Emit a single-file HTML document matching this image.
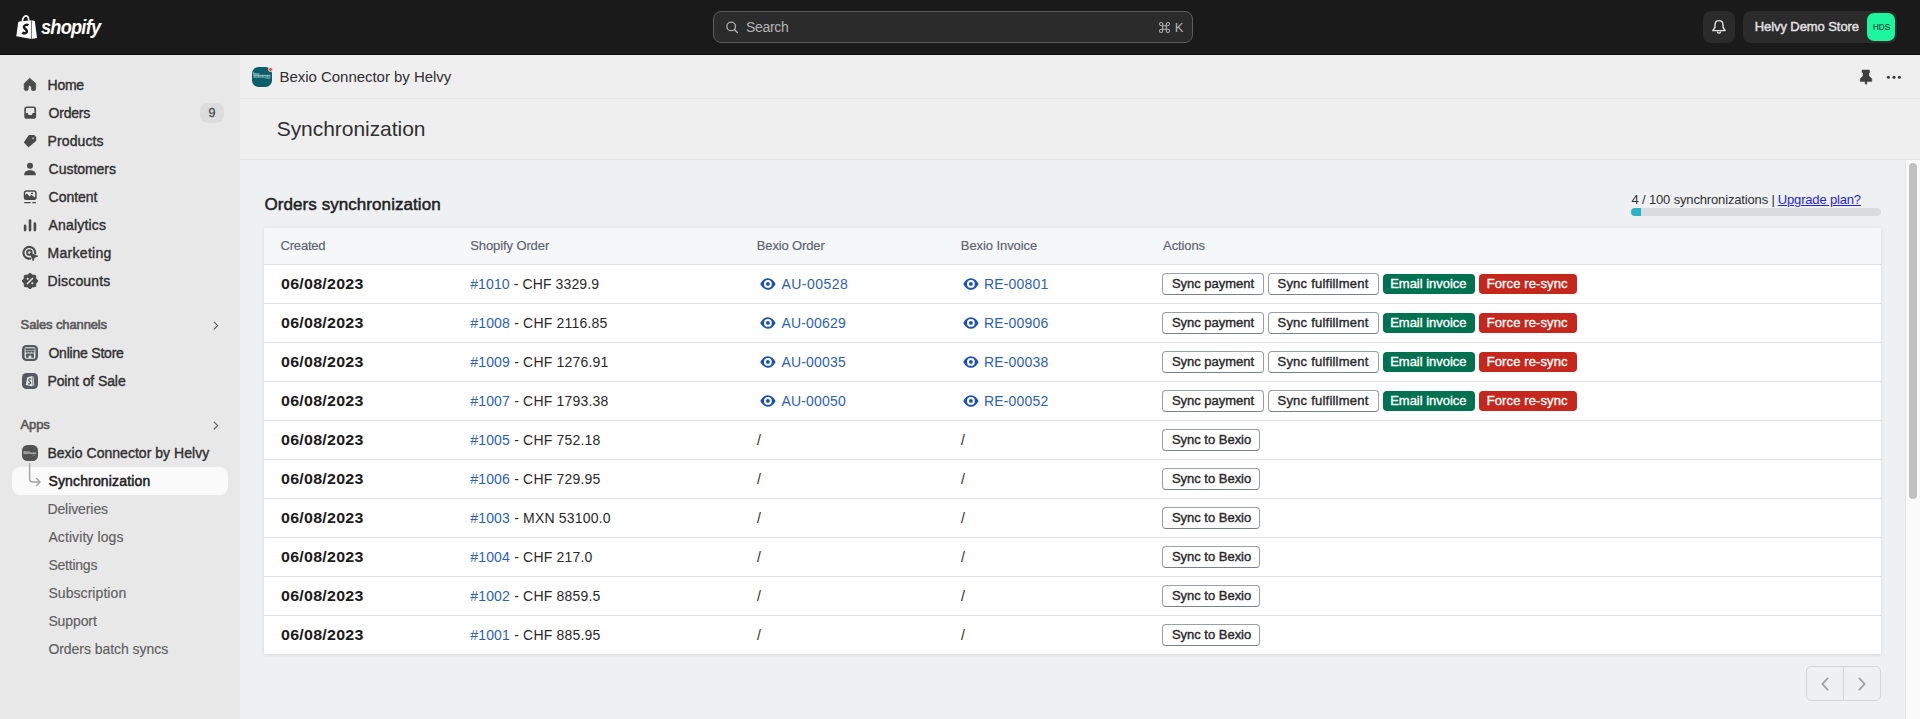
<!DOCTYPE html>
<html><head><meta charset="utf-8"><title>Synchronization</title>
<style>
html,body{margin:0;padding:0;width:1920px;height:719px;overflow:hidden;background:#eff0f2;font-family:"Liberation Sans",sans-serif;}
.a{position:absolute;box-sizing:border-box;}
.t{position:absolute;white-space:nowrap;line-height:0;font-family:"Liberation Sans",sans-serif;}
svg{position:absolute;overflow:visible;}
</style></head><body>
<div class="a" style="left:0px;top:0px;width:1920px;height:55px;background:#1a1a1a;"></div>
<div class="a" style="left:0px;top:54px;width:1920px;height:1px;background:#0c0c0c;"></div>
<div class="a" style="left:0px;top:55px;width:240px;height:664px;background:#e8e8e8;"></div>
<div class="a" style="left:240px;top:55px;width:1680px;height:105px;background:#efefef;"></div>
<div class="a" style="left:240px;top:98px;width:1680px;height:1px;background:#e4e4e4;"></div>
<div class="a" style="left:240px;top:159px;width:1680px;height:1px;background:#e4e4e4;"></div>
<div class="a" style="left:1905px;top:160px;width:15px;height:559px;background:#fafafa;border-left:1px solid #e6e6e6;"></div>
<div class="a" style="left:1909px;top:163px;width:8px;height:336px;background:#c1c1c1;border-radius:4px;"></div>
<div class="a" style="left:713px;top:11px;width:480px;height:32px;background:#2b2b2b;border:1px solid #5c5c5c;border-radius:8px;"></div>
<svg style="left:725px;top:20px" width="14" height="14" viewBox="0 0 14 14"><circle cx="6.2" cy="6.4" r="4.3" fill="none" stroke="#b0b0b0" stroke-width="1.3"/><path d="M9.4 9.6 L12.4 12.6" stroke="#b0b0b0" stroke-width="1.4" stroke-linecap="round"/></svg>
<svg style="left:1159px;top:21.6px" width="11" height="11" viewBox="0 0 11 11"><path d="M3.7 3.7 V2.1 A1.6 1.6 0 1 0 2.1 3.7 H8.9 A1.6 1.6 0 1 0 7.3 2.1 V8.9 A1.6 1.6 0 1 0 8.9 7.3 H2.1 A1.6 1.6 0 1 0 3.7 8.9 Z" fill="none" stroke="#b0b0b0" stroke-width="1.05"/></svg>
<div class="a" style="left:1703px;top:11px;width:32px;height:32px;background:#2b2b2b;border-radius:8px;"></div>
<svg style="left:1711px;top:19px" width="16" height="16" viewBox="0 0 16 16"><path d="M8 1.6c-2.4 0-4 1.9-4 4.3v2.6L1.8 11.6h12.4L12 8.5V5.9C12 3.5 10.4 1.6 8 1.6z" fill="none" stroke="#e3e3e3" stroke-width="1.4" stroke-linejoin="round"/><path d="M6.4 12.4a1.6 1.6 0 0 0 3.2 0" fill="none" stroke="#e3e3e3" stroke-width="1.4"/></svg>
<div class="a" style="left:1743px;top:11px;width:154px;height:32px;background:#2b2b2b;border-radius:8px;"></div>
<div class="a" style="left:1867px;top:13px;width:28px;height:28px;background:#1ef59f;border-radius:7px;"></div>
<svg style="left:16px;top:15px" width="22" height="24" viewBox="0 0 22 24"><path d="M3.2 6.6 L15.5 5.2 L18.8 6 L21 23 L15.5 24 L0.3 21.3 L2.2 7.2 Z" fill="#ffffff"/><path d="M15.5 5.2 L15.6 24" stroke="#1a1a1a" stroke-width="0.6"/><path d="M6.4 6.4 C6.6 2.6 8.4 0.8 10.2 0.9 C12 1 12.6 2.8 12.8 5.8" fill="none" stroke="#ffffff" stroke-width="1.6"/><path d="M12.4 10.2 C11.4 9.5 8.4 9.5 7.9 11.7 C7.5 13.7 11.2 14.2 10.9 16.4 C10.6 18.5 8 18.7 6.3 17.6" fill="none" stroke="#1a1a1a" stroke-width="2.5"/></svg>
<div class="a" style="left:252px;top:67px;width:20px;height:20px;background:#0c5e6a;border-radius:6.5px;"></div>
<svg style="left:252px;top:67px" width="20" height="20" viewBox="0 0 20 20"><g fill="#cfe6e8" opacity=".8"><rect x="1.3" y="5.2" width="1" height="2.3"/><rect x="1.3" y="6.5" width="6.2" height="1"/><rect x="1.3" y="7.9" width="17.2" height="0.9"/><rect x="1.3" y="9.6" width="17.2" height="0.9"/><rect x="2.6" y="8.6" width="0.8" height="1.2"/><rect x="6" y="8.6" width="0.8" height="1.2"/><rect x="10.4" y="8.6" width="0.8" height="1.2"/><rect x="15" y="8.6" width="0.8" height="1.2"/></g><rect x="13.5" y="11.4" width="4.5" height="0.6" fill="#9cc7cc" opacity=".7"/></svg>
<div class="a" style="left:267.5px;top:66.5px;width:5px;height:5px;background:#e04a4a;border-radius:50%;border:1px solid #f6dcdc;"></div>
<svg style="left:1858px;top:69px" width="16" height="16" viewBox="0 0 16 16"><path d="M4.2 0.9 H11.4 L12 3.4 H11 V7 L13.8 9.8 V12.6 H2.2 V9.8 L5 7 V3.4 H3.8 Z M7.1 12.4 H8.9 V14.8 L8 15.4 L7.1 14.8 Z" fill="#3d3d3d" stroke="#3d3d3d" stroke-width="0.4" stroke-linejoin="round"/></svg>
<svg style="left:1886px;top:72px" width="16" height="10" viewBox="0 0 16 10"><circle cx="2.4" cy="5.2" r="1.55" fill="#3a3a3a"/><circle cx="8" cy="5.2" r="1.55" fill="#3a3a3a"/><circle cx="13.4" cy="5.2" r="1.55" fill="#3a3a3a"/></svg>
<div class="a" style="left:1631px;top:208px;width:250px;height:8px;background:#d9dbde;border-radius:4px;"></div>
<div class="a" style="left:1631px;top:208px;width:10px;height:8px;background:#2ab3c7;border-radius:4px 0 0 4px;"></div>
<div class="a" style="left:264px;top:228px;width:1617px;height:426px;background:#ffffff;box-shadow:0 0 4px rgba(63,63,68,0.09),0 2px 3px rgba(63,63,68,0.06);"></div>
<div class="a" style="left:264px;top:228px;width:1617px;height:36px;background:#f6f7f9;"></div>
<div class="a" style="left:264px;top:264px;width:1617px;height:1px;background:#dde0e4;"></div>
<div class="a" style="left:264px;top:303px;width:1617px;height:1px;background:#dde0e4;"></div>
<div class="a" style="left:264px;top:342px;width:1617px;height:1px;background:#dde0e4;"></div>
<div class="a" style="left:264px;top:381px;width:1617px;height:1px;background:#dde0e4;"></div>
<div class="a" style="left:264px;top:420px;width:1617px;height:1px;background:#dde0e4;"></div>
<div class="a" style="left:264px;top:459px;width:1617px;height:1px;background:#dde0e4;"></div>
<div class="a" style="left:264px;top:498px;width:1617px;height:1px;background:#dde0e4;"></div>
<div class="a" style="left:264px;top:537px;width:1617px;height:1px;background:#dde0e4;"></div>
<div class="a" style="left:264px;top:576px;width:1617px;height:1px;background:#dde0e4;"></div>
<div class="a" style="left:264px;top:615px;width:1617px;height:1px;background:#dde0e4;"></div>
<div class="a" style="left:1162px;top:273px;width:102px;height:22px;background:#ffffff;border:1px solid #9a9fa6;border-bottom-color:#7c828a;border-radius:4px;"></div>
<div class="a" style="left:1268px;top:273px;width:111px;height:22px;background:#ffffff;border:1px solid #9a9fa6;border-bottom-color:#7c828a;border-radius:4px;"></div>
<div class="a" style="left:1383px;top:274px;width:92px;height:20px;background:#007250;border-radius:4px;"></div>
<div class="a" style="left:1479px;top:274px;width:98px;height:20px;background:#c5271c;border-radius:4px;"></div>
<svg style="left:760px;top:278px" width="16" height="12" viewBox="0 0 16 12"><path d="M0.3 5.9 C2.2 2.4 4.6 0.2 7.9 0.2 C11.2 0.2 13.6 2.4 15.6 5.9 C13.6 9.4 11.2 11.7 7.9 11.7 C4.6 11.7 2.2 9.4 0.3 5.9 Z" fill="#1c50b4"/><circle cx="7.9" cy="5.9" r="3.9" fill="#fff"/><circle cx="7.9" cy="5.9" r="1.95" fill="#1c50b4"/></svg>
<svg style="left:963px;top:278px" width="16" height="12" viewBox="0 0 16 12"><path d="M0.3 5.9 C2.2 2.4 4.6 0.2 7.9 0.2 C11.2 0.2 13.6 2.4 15.6 5.9 C13.6 9.4 11.2 11.7 7.9 11.7 C4.6 11.7 2.2 9.4 0.3 5.9 Z" fill="#1c50b4"/><circle cx="7.9" cy="5.9" r="3.9" fill="#fff"/><circle cx="7.9" cy="5.9" r="1.95" fill="#1c50b4"/></svg>
<div class="a" style="left:1162px;top:312px;width:102px;height:22px;background:#ffffff;border:1px solid #9a9fa6;border-bottom-color:#7c828a;border-radius:4px;"></div>
<div class="a" style="left:1268px;top:312px;width:111px;height:22px;background:#ffffff;border:1px solid #9a9fa6;border-bottom-color:#7c828a;border-radius:4px;"></div>
<div class="a" style="left:1383px;top:313px;width:92px;height:20px;background:#007250;border-radius:4px;"></div>
<div class="a" style="left:1479px;top:313px;width:98px;height:20px;background:#c5271c;border-radius:4px;"></div>
<svg style="left:760px;top:317px" width="16" height="12" viewBox="0 0 16 12"><path d="M0.3 5.9 C2.2 2.4 4.6 0.2 7.9 0.2 C11.2 0.2 13.6 2.4 15.6 5.9 C13.6 9.4 11.2 11.7 7.9 11.7 C4.6 11.7 2.2 9.4 0.3 5.9 Z" fill="#1c50b4"/><circle cx="7.9" cy="5.9" r="3.9" fill="#fff"/><circle cx="7.9" cy="5.9" r="1.95" fill="#1c50b4"/></svg>
<svg style="left:963px;top:317px" width="16" height="12" viewBox="0 0 16 12"><path d="M0.3 5.9 C2.2 2.4 4.6 0.2 7.9 0.2 C11.2 0.2 13.6 2.4 15.6 5.9 C13.6 9.4 11.2 11.7 7.9 11.7 C4.6 11.7 2.2 9.4 0.3 5.9 Z" fill="#1c50b4"/><circle cx="7.9" cy="5.9" r="3.9" fill="#fff"/><circle cx="7.9" cy="5.9" r="1.95" fill="#1c50b4"/></svg>
<div class="a" style="left:1162px;top:351px;width:102px;height:22px;background:#ffffff;border:1px solid #9a9fa6;border-bottom-color:#7c828a;border-radius:4px;"></div>
<div class="a" style="left:1268px;top:351px;width:111px;height:22px;background:#ffffff;border:1px solid #9a9fa6;border-bottom-color:#7c828a;border-radius:4px;"></div>
<div class="a" style="left:1383px;top:352px;width:92px;height:20px;background:#007250;border-radius:4px;"></div>
<div class="a" style="left:1479px;top:352px;width:98px;height:20px;background:#c5271c;border-radius:4px;"></div>
<svg style="left:760px;top:356px" width="16" height="12" viewBox="0 0 16 12"><path d="M0.3 5.9 C2.2 2.4 4.6 0.2 7.9 0.2 C11.2 0.2 13.6 2.4 15.6 5.9 C13.6 9.4 11.2 11.7 7.9 11.7 C4.6 11.7 2.2 9.4 0.3 5.9 Z" fill="#1c50b4"/><circle cx="7.9" cy="5.9" r="3.9" fill="#fff"/><circle cx="7.9" cy="5.9" r="1.95" fill="#1c50b4"/></svg>
<svg style="left:963px;top:356px" width="16" height="12" viewBox="0 0 16 12"><path d="M0.3 5.9 C2.2 2.4 4.6 0.2 7.9 0.2 C11.2 0.2 13.6 2.4 15.6 5.9 C13.6 9.4 11.2 11.7 7.9 11.7 C4.6 11.7 2.2 9.4 0.3 5.9 Z" fill="#1c50b4"/><circle cx="7.9" cy="5.9" r="3.9" fill="#fff"/><circle cx="7.9" cy="5.9" r="1.95" fill="#1c50b4"/></svg>
<div class="a" style="left:1162px;top:390px;width:102px;height:22px;background:#ffffff;border:1px solid #9a9fa6;border-bottom-color:#7c828a;border-radius:4px;"></div>
<div class="a" style="left:1268px;top:390px;width:111px;height:22px;background:#ffffff;border:1px solid #9a9fa6;border-bottom-color:#7c828a;border-radius:4px;"></div>
<div class="a" style="left:1383px;top:391px;width:92px;height:20px;background:#007250;border-radius:4px;"></div>
<div class="a" style="left:1479px;top:391px;width:98px;height:20px;background:#c5271c;border-radius:4px;"></div>
<svg style="left:760px;top:395px" width="16" height="12" viewBox="0 0 16 12"><path d="M0.3 5.9 C2.2 2.4 4.6 0.2 7.9 0.2 C11.2 0.2 13.6 2.4 15.6 5.9 C13.6 9.4 11.2 11.7 7.9 11.7 C4.6 11.7 2.2 9.4 0.3 5.9 Z" fill="#1c50b4"/><circle cx="7.9" cy="5.9" r="3.9" fill="#fff"/><circle cx="7.9" cy="5.9" r="1.95" fill="#1c50b4"/></svg>
<svg style="left:963px;top:395px" width="16" height="12" viewBox="0 0 16 12"><path d="M0.3 5.9 C2.2 2.4 4.6 0.2 7.9 0.2 C11.2 0.2 13.6 2.4 15.6 5.9 C13.6 9.4 11.2 11.7 7.9 11.7 C4.6 11.7 2.2 9.4 0.3 5.9 Z" fill="#1c50b4"/><circle cx="7.9" cy="5.9" r="3.9" fill="#fff"/><circle cx="7.9" cy="5.9" r="1.95" fill="#1c50b4"/></svg>
<div class="a" style="left:1162px;top:429px;width:98px;height:22px;background:#ffffff;border:1px solid #9a9fa6;border-bottom-color:#7c828a;border-radius:4px;"></div>
<div class="a" style="left:1162px;top:468px;width:98px;height:22px;background:#ffffff;border:1px solid #9a9fa6;border-bottom-color:#7c828a;border-radius:4px;"></div>
<div class="a" style="left:1162px;top:507px;width:98px;height:22px;background:#ffffff;border:1px solid #9a9fa6;border-bottom-color:#7c828a;border-radius:4px;"></div>
<div class="a" style="left:1162px;top:546px;width:98px;height:22px;background:#ffffff;border:1px solid #9a9fa6;border-bottom-color:#7c828a;border-radius:4px;"></div>
<div class="a" style="left:1162px;top:585px;width:98px;height:22px;background:#ffffff;border:1px solid #9a9fa6;border-bottom-color:#7c828a;border-radius:4px;"></div>
<div class="a" style="left:1162px;top:624px;width:98px;height:22px;background:#ffffff;border:1px solid #9a9fa6;border-bottom-color:#7c828a;border-radius:4px;"></div>
<div class="a" style="left:1806px;top:666px;width:75px;height:35px;background:transparent;border:1px solid #d3d6da;border-radius:5px;"></div>
<div class="a" style="left:1843px;top:667px;width:1px;height:33px;background:#d3d6da;"></div>
<svg style="left:1818px;top:677px" width="14" height="14" viewBox="0 0 14 14"><path d="M9.6 1.4 L4.4 7 L9.6 12.6" fill="none" stroke="#9aa0a7" stroke-width="1.8" stroke-linecap="round" stroke-linejoin="round"/></svg>
<svg style="left:1855px;top:677px" width="14" height="14" viewBox="0 0 14 14"><path d="M4.4 1.4 L9.6 7 L4.4 12.6" fill="none" stroke="#9aa0a7" stroke-width="1.8" stroke-linecap="round" stroke-linejoin="round"/></svg>
<div class="a" style="left:200px;top:103px;width:24px;height:20px;background:#dcdcdc;border-radius:8px;"></div>
<div class="a" style="left:12px;top:467px;width:216px;height:28px;background:#fafafa;border-radius:8px;"></div>
<svg style="left:23px;top:77px" width="14" height="14" viewBox="0 0 14 14"><path d="M6.7 1.2 L12.7 6.5 V11.7 a1.9 1.9 0 0 1 -1.9 1.9 H10 a1.7 1.7 0 0 1 -1.7 -1.7 V10.1 a1.5 1.5 0 0 0 -3 0 V11.9 a1.7 1.7 0 0 1 -1.7 1.7 H3.1 a1.9 1.9 0 0 1 -1.9 -1.9 V6.5 Z" fill="#4a4a4a" stroke="#4a4a4a" stroke-width="0.7" stroke-linejoin="round"/></svg>
<svg style="left:23px;top:106px" width="14" height="14" viewBox="0 0 14 14"><rect x="1.3" y="0.5" width="11.8" height="12.3" rx="2.6" fill="#4a4a4a"/><path d="M3.1 2.2 Q3.1 1.9 3.4 1.9 H10.8 Q11.2 1.9 11.2 2.2 L11.5 7.1 H9.7 L8.8 8.9 H5.6 L4.7 7.1 H2.8 Z" fill="#e8e8e8"/></svg>
<svg style="left:23px;top:134px" width="14" height="14" viewBox="0 0 14 14"><path d="M6.2 1.6 H10.8 L12.6 3.2 V6.6 L5.6 12.6 L1.6 8.4 Z" fill="#4a4a4a" stroke="#4a4a4a" stroke-width="1.3" stroke-linejoin="round"/><rect x="9.3" y="3.3" width="1.9" height="1.9" rx="0.5" fill="#a6a6a6"/></svg>
<svg style="left:23px;top:162px" width="14" height="14" viewBox="0 0 14 14"><circle cx="7" cy="3.8" r="3" fill="#4a4a4a"/><path d="M1.2 12.4c0-2.6 2.4-4.2 5.8-4.2s5.8 1.6 5.8 4.2v0.9H1.2z" fill="#4a4a4a"/></svg>
<svg style="left:23px;top:190px" width="14" height="15" viewBox="0 0 14 15"><rect x="1.5" y="0.9" width="11.4" height="8.4" rx="2" fill="#e8e8e8" stroke="#4a4a4a" stroke-width="1.5"/><path d="M1.6 5.6 L3.8 3.4 L6.4 6.2 L8.4 5 L12.8 8 V9.2 H1.6 Z" fill="#4a4a4a"/><circle cx="9" cy="3.6" r="1" fill="#4a4a4a"/><rect x="1.2" y="11.9" width="6.5" height="1.4" rx="0.5" fill="#4a4a4a"/><rect x="9.2" y="11.9" width="3.8" height="1.4" rx="0.5" fill="#4a4a4a"/></svg>
<svg style="left:23px;top:218px" width="14" height="14" viewBox="0 0 14 14"><rect x="0.8" y="6.6" width="2.6" height="6.8" rx="1.3" fill="#4a4a4a"/><rect x="5.7" y="1.2" width="2.6" height="12.2" rx="1.3" fill="#4a4a4a"/><rect x="10.6" y="4.2" width="2.6" height="9.2" rx="1.3" fill="#4a4a4a"/></svg>
<svg style="left:22px;top:245px" width="16" height="16" viewBox="0 0 16 16"><path d="M13.2 8.4A5.9 5.9 0 1 0 8.2 13.6" fill="none" stroke="#4a4a4a" stroke-width="2.1" stroke-linecap="round"/><circle cx="7.4" cy="7.6" r="2.3" fill="none" stroke="#4a4a4a" stroke-width="1.9"/><path d="M8 8.2 L15.8 11.2 L12.4 12.4 L11.2 15.8 Z" fill="#4a4a4a" stroke="#4a4a4a" stroke-width="0.8" stroke-linejoin="round"/></svg>
<svg style="left:22px;top:273px" width="16" height="16" viewBox="0 0 16 16"><path d="M8.00 0.10 L10.45 2.09 L13.59 2.41 L13.91 5.55 L15.90 8.00 L13.91 10.45 L13.59 13.59 L10.45 13.91 L8.00 15.90 L5.55 13.91 L2.41 13.59 L2.09 10.45 L0.10 8.00 L2.09 5.55 L2.41 2.41 L5.55 2.09 Z" fill="#4a4a4a" stroke="#4a4a4a" stroke-width="1" stroke-linejoin="round"/><path d="M5.5 10.6 L10.5 5.4" stroke="#e8e8e8" stroke-width="1.5" stroke-linecap="round"/><circle cx="5.7" cy="5.8" r="1.05" fill="#e8e8e8"/><circle cx="10.3" cy="10.3" r="1.05" fill="#e8e8e8"/></svg>
<div class="a" style="left:22px;top:345px;width:16px;height:16px;background:#55595f;border-radius:4.5px;"></div>
<svg style="left:22px;top:345px" width="16" height="16" viewBox="0 0 16 16"><rect x="2.6" y="2.3" width="10.8" height="11.4" rx="1.6" fill="#e8e8e8"/><rect x="3.4" y="3.3" width="9.2" height="1.7" fill="#55595f"/><path d="M3.4 5.6h9.2v0.6a1.5 1.5 0 0 1-3 0a1.5 1.5 0 0 1-3.1 0a1.5 1.5 0 0 1-3.1 0z" fill="#55595f"/><path d="M4 8.6h8v4.2H9.3V10.4H6.7v2.4H4z" fill="#55595f"/></svg>
<div class="a" style="left:22px;top:373px;width:16px;height:16px;background:#55595f;border-radius:4.5px;"></div>
<svg style="left:22px;top:373px" width="16" height="16" viewBox="0 0 16 16"><path d="M5.2 4.6 L9.4 3.2 L11.6 3.6 L12.3 12.6 L9.6 13.2 L3.8 12 Z" fill="#e8e8e8"/><path d="M10.6 3.6 L10.9 12.8" stroke="#55595f" stroke-width="0.7"/><path d="M9.4 6.2 C8.4 5.6 6.6 5.8 6.8 7.2 C7 8.4 8.8 8.6 8.6 10 C8.4 11.2 7 11.2 6 10.6" fill="none" stroke="#55595f" stroke-width="1.3"/></svg>
<div class="a" style="left:22px;top:445px;width:16px;height:16px;background:#525252;border-radius:5.5px;"></div>
<svg style="left:22px;top:445px" width="16" height="16" viewBox="0 0 16 16"><rect x="1.4" y="6.4" width="3.2" height="1" fill="#d0d0d0"/><rect x="1.4" y="7.6" width="4.6" height="1.1" fill="#c8c8c8"/><rect x="5.2" y="6.4" width="2.4" height="1" fill="#b8b8b8"/><rect x="6.3" y="7.6" width="8" height="1.1" fill="#c8c8c8"/><rect x="10.5" y="9.8" width="3" height="0.6" fill="#9a9a9a"/></svg>
<svg style="left:28px;top:462px" width="16" height="26" viewBox="0 0 16 26"><path d="M1.6 1 V16.8 a3.2 3.2 0 0 0 3.2 3.2 H11.6" fill="none" stroke="#a3a3a3" stroke-width="1.4"/><path d="M8.6 16.6 L12 20 L8.6 23.4" fill="none" stroke="#a3a3a3" stroke-width="1.4" stroke-linecap="round" stroke-linejoin="round"/></svg>
<svg style="left:212px;top:321px" width="8" height="9" viewBox="0 0 8 9"><path d="M2.2 1.2 L5.6 4.6 L2.2 8" fill="none" stroke="#616161" stroke-width="1.2" stroke-linecap="round" stroke-linejoin="round"/></svg>
<svg style="left:212px;top:421px" width="8" height="9" viewBox="0 0 8 9"><path d="M2.2 1.2 L5.6 4.6 L2.2 8" fill="none" stroke="#616161" stroke-width="1.2" stroke-linecap="round" stroke-linejoin="round"/></svg>
<div class="t" style="left:40.50px;top:27px;font-size:21px;font-weight:700;color:#ffffff;letter-spacing:-0.900px;transform:scaleX(0.8670);transform-origin:-0.00px 0;font-style:italic;">shopify</div>
<div class="t" style="left:746.00px;top:27px;font-size:14px;font-weight:400;color:#b5b5b5;letter-spacing:-0.314px;">Search</div>
<div class="t" style="left:1754.70px;top:27px;font-size:13px;font-weight:400;color:#e3e3e3;letter-spacing:-0.077px;-webkit-text-stroke:0.4px #e3e3e3;">Helvy Demo Store</div>
<div class="t" style="left:1872.50px;top:27px;font-size:9px;font-weight:400;color:#0b4a33;letter-spacing:0.000px;transform:scaleX(0.8948);transform-origin:-0.00px 0;-webkit-text-stroke:0.15px #0b4a33;">HDS</div>
<div class="t" style="left:1174.70px;top:28px;font-size:13px;font-weight:400;color:#b5b5b5;letter-spacing:0.000px;">K</div>
<div class="t" style="left:279.50px;top:77px;font-size:15px;font-weight:400;color:#303030;letter-spacing:-0.034px;">Bexio Connector by Helvy</div>
<div class="t" style="left:276.70px;top:129px;font-size:21px;font-weight:400;color:#303030;letter-spacing:-0.046px;">Synchronization</div>
<div class="t" style="left:264.50px;top:205px;font-size:17px;font-weight:400;color:#202223;letter-spacing:0.065px;-webkit-text-stroke:0.5px #202223;">Orders synchronization</div>
<div class="t" style="left:1631.50px;top:200px;font-size:13px;font-weight:400;color:#303030;letter-spacing:-0.152px;">4 / 100 synchronizations |</div>
<div class="t" style="left:1777.80px;top:200px;font-size:13px;font-weight:400;color:#1f1fe0;letter-spacing:-0.171px;text-decoration:underline;">Upgrade plan?</div>
<div class="t" style="left:280.60px;top:246px;font-size:13px;font-weight:400;color:#5a626d;letter-spacing:-0.220px;-webkit-text-stroke:0.15px #5a626d;">Created</div>
<div class="t" style="left:470.20px;top:246px;font-size:13px;font-weight:400;color:#5a626d;letter-spacing:-0.098px;-webkit-text-stroke:0.15px #5a626d;">Shopify Order</div>
<div class="t" style="left:756.80px;top:246px;font-size:13px;font-weight:400;color:#5a626d;letter-spacing:-0.143px;-webkit-text-stroke:0.15px #5a626d;">Bexio Order</div>
<div class="t" style="left:960.80px;top:246px;font-size:13px;font-weight:400;color:#5a626d;letter-spacing:-0.074px;-webkit-text-stroke:0.15px #5a626d;">Bexio Invoice</div>
<div class="t" style="left:1163.10px;top:246px;font-size:13px;font-weight:400;color:#5a626d;letter-spacing:-0.105px;-webkit-text-stroke:0.15px #5a626d;">Actions</div>
<div class="t" style="left:47.60px;top:85px;font-size:14px;font-weight:400;color:#303030;letter-spacing:-0.286px;-webkit-text-stroke:0.38px #303030;">Home</div>
<div class="t" style="left:48.60px;top:113px;font-size:14px;font-weight:400;color:#303030;letter-spacing:-0.217px;-webkit-text-stroke:0.38px #303030;">Orders</div>
<div class="t" style="left:47.60px;top:141px;font-size:14px;font-weight:400;color:#303030;letter-spacing:0.107px;-webkit-text-stroke:0.38px #303030;">Products</div>
<div class="t" style="left:48.60px;top:169px;font-size:14px;font-weight:400;color:#303030;letter-spacing:-0.035px;-webkit-text-stroke:0.38px #303030;">Customers</div>
<div class="t" style="left:48.60px;top:197px;font-size:14px;font-weight:400;color:#303030;letter-spacing:-0.024px;-webkit-text-stroke:0.38px #303030;">Content</div>
<div class="t" style="left:48.60px;top:225px;font-size:14px;font-weight:400;color:#303030;letter-spacing:0.172px;-webkit-text-stroke:0.38px #303030;">Analytics</div>
<div class="t" style="left:47.60px;top:253px;font-size:14px;font-weight:400;color:#303030;letter-spacing:0.290px;-webkit-text-stroke:0.38px #303030;">Marketing</div>
<div class="t" style="left:47.60px;top:281px;font-size:14px;font-weight:400;color:#303030;letter-spacing:0.141px;-webkit-text-stroke:0.38px #303030;">Discounts</div>
<div class="t" style="left:208.60px;top:113px;font-size:12.5px;font-weight:400;color:#4a4a4a;letter-spacing:0.000px;-webkit-text-stroke:0.3px #4a4a4a;">9</div>
<div class="t" style="left:20.60px;top:325px;font-size:13px;font-weight:400;color:#5a5a5a;letter-spacing:-0.128px;-webkit-text-stroke:0.6px #5a5a5a;">Sales channels</div>
<div class="t" style="left:48.40px;top:353px;font-size:14px;font-weight:400;color:#303030;letter-spacing:-0.212px;-webkit-text-stroke:0.38px #303030;">Online Store</div>
<div class="t" style="left:47.40px;top:381px;font-size:14px;font-weight:400;color:#303030;letter-spacing:-0.092px;-webkit-text-stroke:0.38px #303030;">Point of Sale</div>
<div class="t" style="left:20.60px;top:425px;font-size:13px;font-weight:400;color:#5a5a5a;letter-spacing:-0.177px;-webkit-text-stroke:0.6px #5a5a5a;">Apps</div>
<div class="t" style="left:47.40px;top:453px;font-size:14px;font-weight:400;color:#303030;letter-spacing:0.032px;-webkit-text-stroke:0.38px #303030;">Bexio Connector by Helvy</div>
<div class="t" style="left:48.40px;top:481px;font-size:14px;font-weight:400;color:#202020;letter-spacing:0.155px;-webkit-text-stroke:0.5px #202020;">Synchronization</div>
<div class="t" style="left:47.40px;top:509px;font-size:14px;font-weight:400;color:#5e5e5e;letter-spacing:-0.085px;-webkit-text-stroke:0.15px #5e5e5e;">Deliveries</div>
<div class="t" style="left:48.40px;top:537px;font-size:14px;font-weight:400;color:#5e5e5e;letter-spacing:0.091px;-webkit-text-stroke:0.15px #5e5e5e;">Activity logs</div>
<div class="t" style="left:48.40px;top:565px;font-size:14px;font-weight:400;color:#5e5e5e;letter-spacing:-0.227px;-webkit-text-stroke:0.15px #5e5e5e;">Settings</div>
<div class="t" style="left:48.40px;top:593px;font-size:14px;font-weight:400;color:#5e5e5e;letter-spacing:0.068px;-webkit-text-stroke:0.15px #5e5e5e;">Subscription</div>
<div class="t" style="left:48.40px;top:621px;font-size:14px;font-weight:400;color:#5e5e5e;letter-spacing:-0.107px;-webkit-text-stroke:0.15px #5e5e5e;">Support</div>
<div class="t" style="left:48.40px;top:649px;font-size:14px;font-weight:400;color:#5e5e5e;letter-spacing:-0.047px;-webkit-text-stroke:0.15px #5e5e5e;">Orders batch syncs</div>
<div class="t" style="left:280.70px;top:284px;font-size:15px;font-weight:700;color:#1a1a1a;letter-spacing:0.250px;transform:scaleX(1.0652);transform-origin:-0.00px 0;">06/08/2023</div>
<div class="t" style="left:470.20px;top:284px;font-size:14px;font-weight:400;color:#2a2a2a;letter-spacing:0.114px;"><span style="color:#2c5fb8">#1010</span> - CHF 3329.9</div>
<div class="t" style="left:781.40px;top:284px;font-size:14px;font-weight:400;color:#2c5fb8;letter-spacing:0.492px;">AU-00528</div>
<div class="t" style="left:983.90px;top:284px;font-size:14px;font-weight:400;color:#2c5fb8;letter-spacing:0.192px;">RE-00801</div>
<div class="t" style="left:1171.90px;top:284px;font-size:13px;font-weight:400;color:#2a2a2a;letter-spacing:-0.024px;-webkit-text-stroke:0.4px #2a2a2a;">Sync payment</div>
<div class="t" style="left:1277.50px;top:284px;font-size:13px;font-weight:400;color:#2a2a2a;letter-spacing:0.226px;-webkit-text-stroke:0.4px #2a2a2a;">Sync fulfillment</div>
<div class="t" style="left:1390.20px;top:284px;font-size:13px;font-weight:400;color:#ffffff;letter-spacing:-0.021px;-webkit-text-stroke:0.35px #ffffff;">Email invoice</div>
<div class="t" style="left:1486.70px;top:284px;font-size:13px;font-weight:400;color:#ffffff;letter-spacing:0.112px;-webkit-text-stroke:0.35px #ffffff;">Force re-sync</div>
<div class="t" style="left:280.70px;top:323px;font-size:15px;font-weight:700;color:#1a1a1a;letter-spacing:0.250px;transform:scaleX(1.0652);transform-origin:-0.00px 0;">06/08/2023</div>
<div class="t" style="left:470.20px;top:323px;font-size:14px;font-weight:400;color:#2a2a2a;letter-spacing:0.192px;"><span style="color:#2c5fb8">#1008</span> - CHF 2116.85</div>
<div class="t" style="left:781.40px;top:323px;font-size:14px;font-weight:400;color:#2c5fb8;letter-spacing:0.192px;">AU-00629</div>
<div class="t" style="left:983.90px;top:323px;font-size:14px;font-weight:400;color:#2c5fb8;letter-spacing:0.192px;">RE-00906</div>
<div class="t" style="left:1171.90px;top:323px;font-size:13px;font-weight:400;color:#2a2a2a;letter-spacing:-0.024px;-webkit-text-stroke:0.4px #2a2a2a;">Sync payment</div>
<div class="t" style="left:1277.50px;top:323px;font-size:13px;font-weight:400;color:#2a2a2a;letter-spacing:0.226px;-webkit-text-stroke:0.4px #2a2a2a;">Sync fulfillment</div>
<div class="t" style="left:1390.20px;top:323px;font-size:13px;font-weight:400;color:#ffffff;letter-spacing:-0.021px;-webkit-text-stroke:0.35px #ffffff;">Email invoice</div>
<div class="t" style="left:1486.70px;top:323px;font-size:13px;font-weight:400;color:#ffffff;letter-spacing:0.112px;-webkit-text-stroke:0.35px #ffffff;">Force re-sync</div>
<div class="t" style="left:280.70px;top:362px;font-size:15px;font-weight:700;color:#1a1a1a;letter-spacing:0.250px;transform:scaleX(1.0652);transform-origin:-0.00px 0;">06/08/2023</div>
<div class="t" style="left:470.20px;top:362px;font-size:14px;font-weight:400;color:#2a2a2a;letter-spacing:0.192px;"><span style="color:#2c5fb8">#1009</span> - CHF 1276.91</div>
<div class="t" style="left:781.40px;top:362px;font-size:14px;font-weight:400;color:#2c5fb8;letter-spacing:0.192px;">AU-00035</div>
<div class="t" style="left:983.90px;top:362px;font-size:14px;font-weight:400;color:#2c5fb8;letter-spacing:0.192px;">RE-00038</div>
<div class="t" style="left:1171.90px;top:362px;font-size:13px;font-weight:400;color:#2a2a2a;letter-spacing:-0.024px;-webkit-text-stroke:0.4px #2a2a2a;">Sync payment</div>
<div class="t" style="left:1277.50px;top:362px;font-size:13px;font-weight:400;color:#2a2a2a;letter-spacing:0.226px;-webkit-text-stroke:0.4px #2a2a2a;">Sync fulfillment</div>
<div class="t" style="left:1390.20px;top:362px;font-size:13px;font-weight:400;color:#ffffff;letter-spacing:-0.021px;-webkit-text-stroke:0.35px #ffffff;">Email invoice</div>
<div class="t" style="left:1486.70px;top:362px;font-size:13px;font-weight:400;color:#ffffff;letter-spacing:0.112px;-webkit-text-stroke:0.35px #ffffff;">Force re-sync</div>
<div class="t" style="left:280.70px;top:401px;font-size:15px;font-weight:700;color:#1a1a1a;letter-spacing:0.250px;transform:scaleX(1.0652);transform-origin:-0.00px 0;">06/08/2023</div>
<div class="t" style="left:470.20px;top:401px;font-size:14px;font-weight:400;color:#2a2a2a;letter-spacing:0.192px;"><span style="color:#2c5fb8">#1007</span> - CHF 1793.38</div>
<div class="t" style="left:781.40px;top:401px;font-size:14px;font-weight:400;color:#2c5fb8;letter-spacing:0.192px;">AU-00050</div>
<div class="t" style="left:983.90px;top:401px;font-size:14px;font-weight:400;color:#2c5fb8;letter-spacing:0.192px;">RE-00052</div>
<div class="t" style="left:1171.90px;top:401px;font-size:13px;font-weight:400;color:#2a2a2a;letter-spacing:-0.024px;-webkit-text-stroke:0.4px #2a2a2a;">Sync payment</div>
<div class="t" style="left:1277.50px;top:401px;font-size:13px;font-weight:400;color:#2a2a2a;letter-spacing:0.226px;-webkit-text-stroke:0.4px #2a2a2a;">Sync fulfillment</div>
<div class="t" style="left:1390.20px;top:401px;font-size:13px;font-weight:400;color:#ffffff;letter-spacing:-0.021px;-webkit-text-stroke:0.35px #ffffff;">Email invoice</div>
<div class="t" style="left:1486.70px;top:401px;font-size:13px;font-weight:400;color:#ffffff;letter-spacing:0.112px;-webkit-text-stroke:0.35px #ffffff;">Force re-sync</div>
<div class="t" style="left:280.70px;top:440px;font-size:15px;font-weight:700;color:#1a1a1a;letter-spacing:0.250px;transform:scaleX(1.0652);transform-origin:-0.00px 0;">06/08/2023</div>
<div class="t" style="left:470.20px;top:440px;font-size:14px;font-weight:400;color:#2a2a2a;letter-spacing:0.192px;"><span style="color:#2c5fb8">#1005</span> - CHF 752.18</div>
<div class="t" style="left:757.00px;top:440px;font-size:14px;font-weight:400;color:#2a2a2a;letter-spacing:0.192px;">/</div>
<div class="t" style="left:961.00px;top:440px;font-size:14px;font-weight:400;color:#2a2a2a;letter-spacing:0.192px;">/</div>
<div class="t" style="left:1171.90px;top:440px;font-size:13px;font-weight:400;color:#2a2a2a;letter-spacing:-0.013px;-webkit-text-stroke:0.4px #2a2a2a;">Sync to Bexio</div>
<div class="t" style="left:280.70px;top:479px;font-size:15px;font-weight:700;color:#1a1a1a;letter-spacing:0.250px;transform:scaleX(1.0652);transform-origin:-0.00px 0;">06/08/2023</div>
<div class="t" style="left:470.20px;top:479px;font-size:14px;font-weight:400;color:#2a2a2a;letter-spacing:0.192px;"><span style="color:#2c5fb8">#1006</span> - CHF 729.95</div>
<div class="t" style="left:757.00px;top:479px;font-size:14px;font-weight:400;color:#2a2a2a;letter-spacing:0.192px;">/</div>
<div class="t" style="left:961.00px;top:479px;font-size:14px;font-weight:400;color:#2a2a2a;letter-spacing:0.192px;">/</div>
<div class="t" style="left:1171.90px;top:479px;font-size:13px;font-weight:400;color:#2a2a2a;letter-spacing:-0.013px;-webkit-text-stroke:0.4px #2a2a2a;">Sync to Bexio</div>
<div class="t" style="left:280.70px;top:518px;font-size:15px;font-weight:700;color:#1a1a1a;letter-spacing:0.250px;transform:scaleX(1.0652);transform-origin:-0.00px 0;">06/08/2023</div>
<div class="t" style="left:470.20px;top:518px;font-size:14px;font-weight:400;color:#2a2a2a;letter-spacing:0.192px;"><span style="color:#2c5fb8">#1003</span> - MXN 53100.0</div>
<div class="t" style="left:757.00px;top:518px;font-size:14px;font-weight:400;color:#2a2a2a;letter-spacing:0.192px;">/</div>
<div class="t" style="left:961.00px;top:518px;font-size:14px;font-weight:400;color:#2a2a2a;letter-spacing:0.192px;">/</div>
<div class="t" style="left:1171.90px;top:518px;font-size:13px;font-weight:400;color:#2a2a2a;letter-spacing:-0.013px;-webkit-text-stroke:0.4px #2a2a2a;">Sync to Bexio</div>
<div class="t" style="left:280.70px;top:557px;font-size:15px;font-weight:700;color:#1a1a1a;letter-spacing:0.250px;transform:scaleX(1.0652);transform-origin:-0.00px 0;">06/08/2023</div>
<div class="t" style="left:470.20px;top:557px;font-size:14px;font-weight:400;color:#2a2a2a;letter-spacing:0.192px;"><span style="color:#2c5fb8">#1004</span> - CHF 217.0</div>
<div class="t" style="left:757.00px;top:557px;font-size:14px;font-weight:400;color:#2a2a2a;letter-spacing:0.192px;">/</div>
<div class="t" style="left:961.00px;top:557px;font-size:14px;font-weight:400;color:#2a2a2a;letter-spacing:0.192px;">/</div>
<div class="t" style="left:1171.90px;top:557px;font-size:13px;font-weight:400;color:#2a2a2a;letter-spacing:-0.013px;-webkit-text-stroke:0.4px #2a2a2a;">Sync to Bexio</div>
<div class="t" style="left:280.70px;top:596px;font-size:15px;font-weight:700;color:#1a1a1a;letter-spacing:0.250px;transform:scaleX(1.0652);transform-origin:-0.00px 0;">06/08/2023</div>
<div class="t" style="left:470.20px;top:596px;font-size:14px;font-weight:400;color:#2a2a2a;letter-spacing:0.192px;"><span style="color:#2c5fb8">#1002</span> - CHF 8859.5</div>
<div class="t" style="left:757.00px;top:596px;font-size:14px;font-weight:400;color:#2a2a2a;letter-spacing:0.192px;">/</div>
<div class="t" style="left:961.00px;top:596px;font-size:14px;font-weight:400;color:#2a2a2a;letter-spacing:0.192px;">/</div>
<div class="t" style="left:1171.90px;top:596px;font-size:13px;font-weight:400;color:#2a2a2a;letter-spacing:-0.013px;-webkit-text-stroke:0.4px #2a2a2a;">Sync to Bexio</div>
<div class="t" style="left:280.70px;top:635px;font-size:15px;font-weight:700;color:#1a1a1a;letter-spacing:0.250px;transform:scaleX(1.0652);transform-origin:-0.00px 0;">06/08/2023</div>
<div class="t" style="left:470.20px;top:635px;font-size:14px;font-weight:400;color:#2a2a2a;letter-spacing:0.192px;"><span style="color:#2c5fb8">#1001</span> - CHF 885.95</div>
<div class="t" style="left:757.00px;top:635px;font-size:14px;font-weight:400;color:#2a2a2a;letter-spacing:0.192px;">/</div>
<div class="t" style="left:961.00px;top:635px;font-size:14px;font-weight:400;color:#2a2a2a;letter-spacing:0.192px;">/</div>
<div class="t" style="left:1171.90px;top:635px;font-size:13px;font-weight:400;color:#2a2a2a;letter-spacing:-0.013px;-webkit-text-stroke:0.4px #2a2a2a;">Sync to Bexio</div>
</body></html>
